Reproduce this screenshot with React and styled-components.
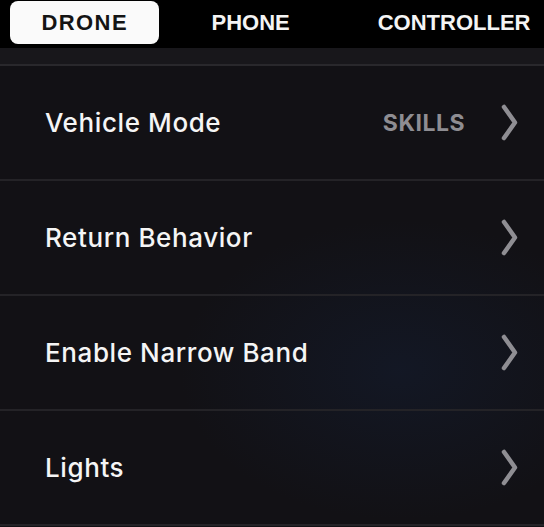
import styled, { createGlobalStyle } from "styled-components";

const GlobalStyle = createGlobalStyle`
    html, body {
        margin: 0;
        padding: 0;
        background: #000;
    }
    * {
        box-sizing: border-box;
    }
`;

const Page = styled.div`
    width: 544px;
    height: 527px;
    overflow: hidden;
    display: flex;
    flex-direction: column;
    background:
        radial-gradient(ellipse 220px 150px at 400px 370px, rgba(20, 30, 52, 0.5), rgba(20, 30, 52, 0) 100%),
        #121115;
`;

const TabBar = styled.div`
    height: 48px;
    flex-shrink: 0;
    display: flex;
    align-items: flex-start;
    gap: 22px;
    padding: 1px 0 0 10px;
    background: #000;
    overflow: hidden;
`;

const Tab = styled.div`
    height: 43px;
    padding: 0 ${props => props.$pad}px;
    display: flex;
    align-items: center;
    justify-content: center;
    flex-shrink: 0;
    border-radius: 8px;
    background: ${props => props.$active ? "#fafafa" : "transparent"};
    color: ${props => props.$active ? "#141414" : "#f4f4f4"};
    font-family: "Liberation Sans", Arial, sans-serif;
    font-weight: 700;
    font-size: 22px;
    letter-spacing: ${props => props.$spacing}px;
`;

const Strip = styled.div`
    height: 18px;
    flex-shrink: 0;
    background: #18171b;
    border-bottom: 2px solid #29282c;
`;

const List = styled.div`
    display: flex;
    flex-direction: column;
`;

const Row = styled.div`
    height: 115px;
    flex-shrink: 0;
    display: flex;
    align-items: center;
    padding: 0 26px 0 45px;
    border-bottom: 2px solid #242327;
`;

const Label = styled.div`
    flex: 1;
    color: #f5f5f5;
    font-family: Inter, "Noto Sans", sans-serif;
    font-weight: 500;
    font-size: 26px;
    letter-spacing: 0.6px;
`;

const Value = styled.div`
    margin-right: 36px;
    color: #8e8d92;
    font-family: Inter, "Noto Sans", sans-serif;
    font-weight: 700;
    font-size: 23px;
    letter-spacing: 0.5px;
`;

const Chevron = () => (
    <svg width="17" height="37" viewBox="0 0 17 37">
        <polyline
            points="3,3 14,18.5 3,34"
            fill="none"
            stroke="#8f8e93"
            strokeWidth="4.5"
            strokeLinecap="round"
            strokeLinejoin="round"
        />
    </svg>
);

const tabs = [
    { name: "DRONE", active: true, pad: 31.5, spacing: 1.4 },
    { name: "PHONE", pad: 30, spacing: 0 },
    { name: "CONTROLLER", pad: 36, spacing: 0 },
];

const rows = [
    { label: "Vehicle Mode", value: "SKILLS" },
    { label: "Return Behavior" },
    { label: "Enable Narrow Band" },
    { label: "Lights" },
];

const App = () => {
    return (
        <>
            <GlobalStyle />
            <Page>
                <TabBar>
                    {tabs.map((tab) => (
                        <Tab key={tab.name} $active={tab.active} $pad={tab.pad} $spacing={tab.spacing}>
                            {tab.name}
                        </Tab>
                    ))}
                </TabBar>
                <Strip />
                <List>
                    {rows.map((row) => (
                        <Row key={row.label}>
                            <Label>{row.label}</Label>
                            {row.value && <Value>{row.value}</Value>}
                            <Chevron />
                        </Row>
                    ))}
                </List>
            </Page>
        </>
    );
};

export default App;
